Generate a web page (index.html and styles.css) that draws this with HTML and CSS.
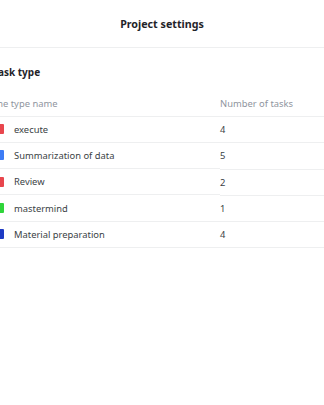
FILE: index.html
```html
<!DOCTYPE html>
<html lang="en">
<head>
  <meta charset="UTF-8">
  <meta name="viewport" content="width=device-width, initial-scale=1.0">
  <title>Project settings</title>
  <link rel="stylesheet" href="styles.css">
</head>
<body>
  <header class="topbar">
    <h1>Project settings</h1>
  </header>

  <section class="panel">
    <h2 class="panel-title">Task type</h2>
    <table class="type-table">
      <thead>
        <tr>
          <th class="col-name">The type name</th>
          <th class="col-count">Number of tasks</th>
        </tr>
      </thead>
      <tbody>
        <tr>
          <td class="col-name"><span class="swatch red"></span>execute</td>
          <td class="col-count">4</td>
        </tr>
        <tr>
          <td class="col-name"><span class="swatch blue"></span>Summarization of data</td>
          <td class="col-count">5</td>
        </tr>
        <tr>
          <td class="col-name"><span class="swatch red"></span>Review</td>
          <td class="col-count">2</td>
        </tr>
        <tr>
          <td class="col-name"><span class="swatch green"></span>mastermind</td>
          <td class="col-count">1</td>
        </tr>
        <tr>
          <td class="col-name"><span class="swatch navy"></span>Material preparation</td>
          <td class="col-count">4</td>
        </tr>
      </tbody>
    </table>
  </section>
</body>
</html>
```

FILE: styles.css
```css
html, body {
  margin: 0;
  padding: 0;
  overflow: hidden;
}
body {
  font-family: 'Noto Sans', sans-serif;
  background-color: #ffffff;
  color: #1f2329;
  width: 324px;
  height: 405px;
}

.topbar {
  height: 47px;
  display: flex;
  align-items: center;
  justify-content: center;
  border-bottom: 1px solid #eeeff0;
}
.topbar h1 {
  margin: 0;
  font-size: 10.7px;
  font-weight: 700;
  color: #1f2329;
}

/* panel is scrolled a little to the left, so its left edge is cut */
.panel {
  margin-left: -8px;
  width: 332px;
}
.panel-title {
  margin: 0;
  padding: 16px 0 0 1px;
  height: 30px;
  font-size: 10px;
  font-weight: 700;
  line-height: 16px;
  color: #1f2329;
  box-sizing: border-box;
}

.type-table {
  width: 100%;
  border-collapse: collapse;
  font-size: 9.4px;
}
.type-table th {
  font-weight: 400;
  color: #8f959e;
  text-align: left;
  height: 38px;
  padding: 13px 0 0 0;
  box-sizing: border-box;
  border-bottom: 1px solid #eeeff0;
}
.type-table td {
  height: 25.3px;
  padding: 0;
  color: #3b3f45;
  border-bottom: 1px solid #eeeff0;
}
.col-name {
  width: 228px;
}
.type-table td.col-name {
  display: flex;
  align-items: center;
  gap: 10px;
  height: 25.3px;
}
.swatch {
  display: inline-block;
  width: 10px;
  height: 10px;
  margin-left: 2px;
  border-radius: 1px;
}
.swatch.red { background-color: #e8464d; }
.swatch.blue { background-color: #3d7cf5; }
.swatch.green { background-color: #2fd53a; }
.swatch.navy { background-color: #1e3bc4; }
```
